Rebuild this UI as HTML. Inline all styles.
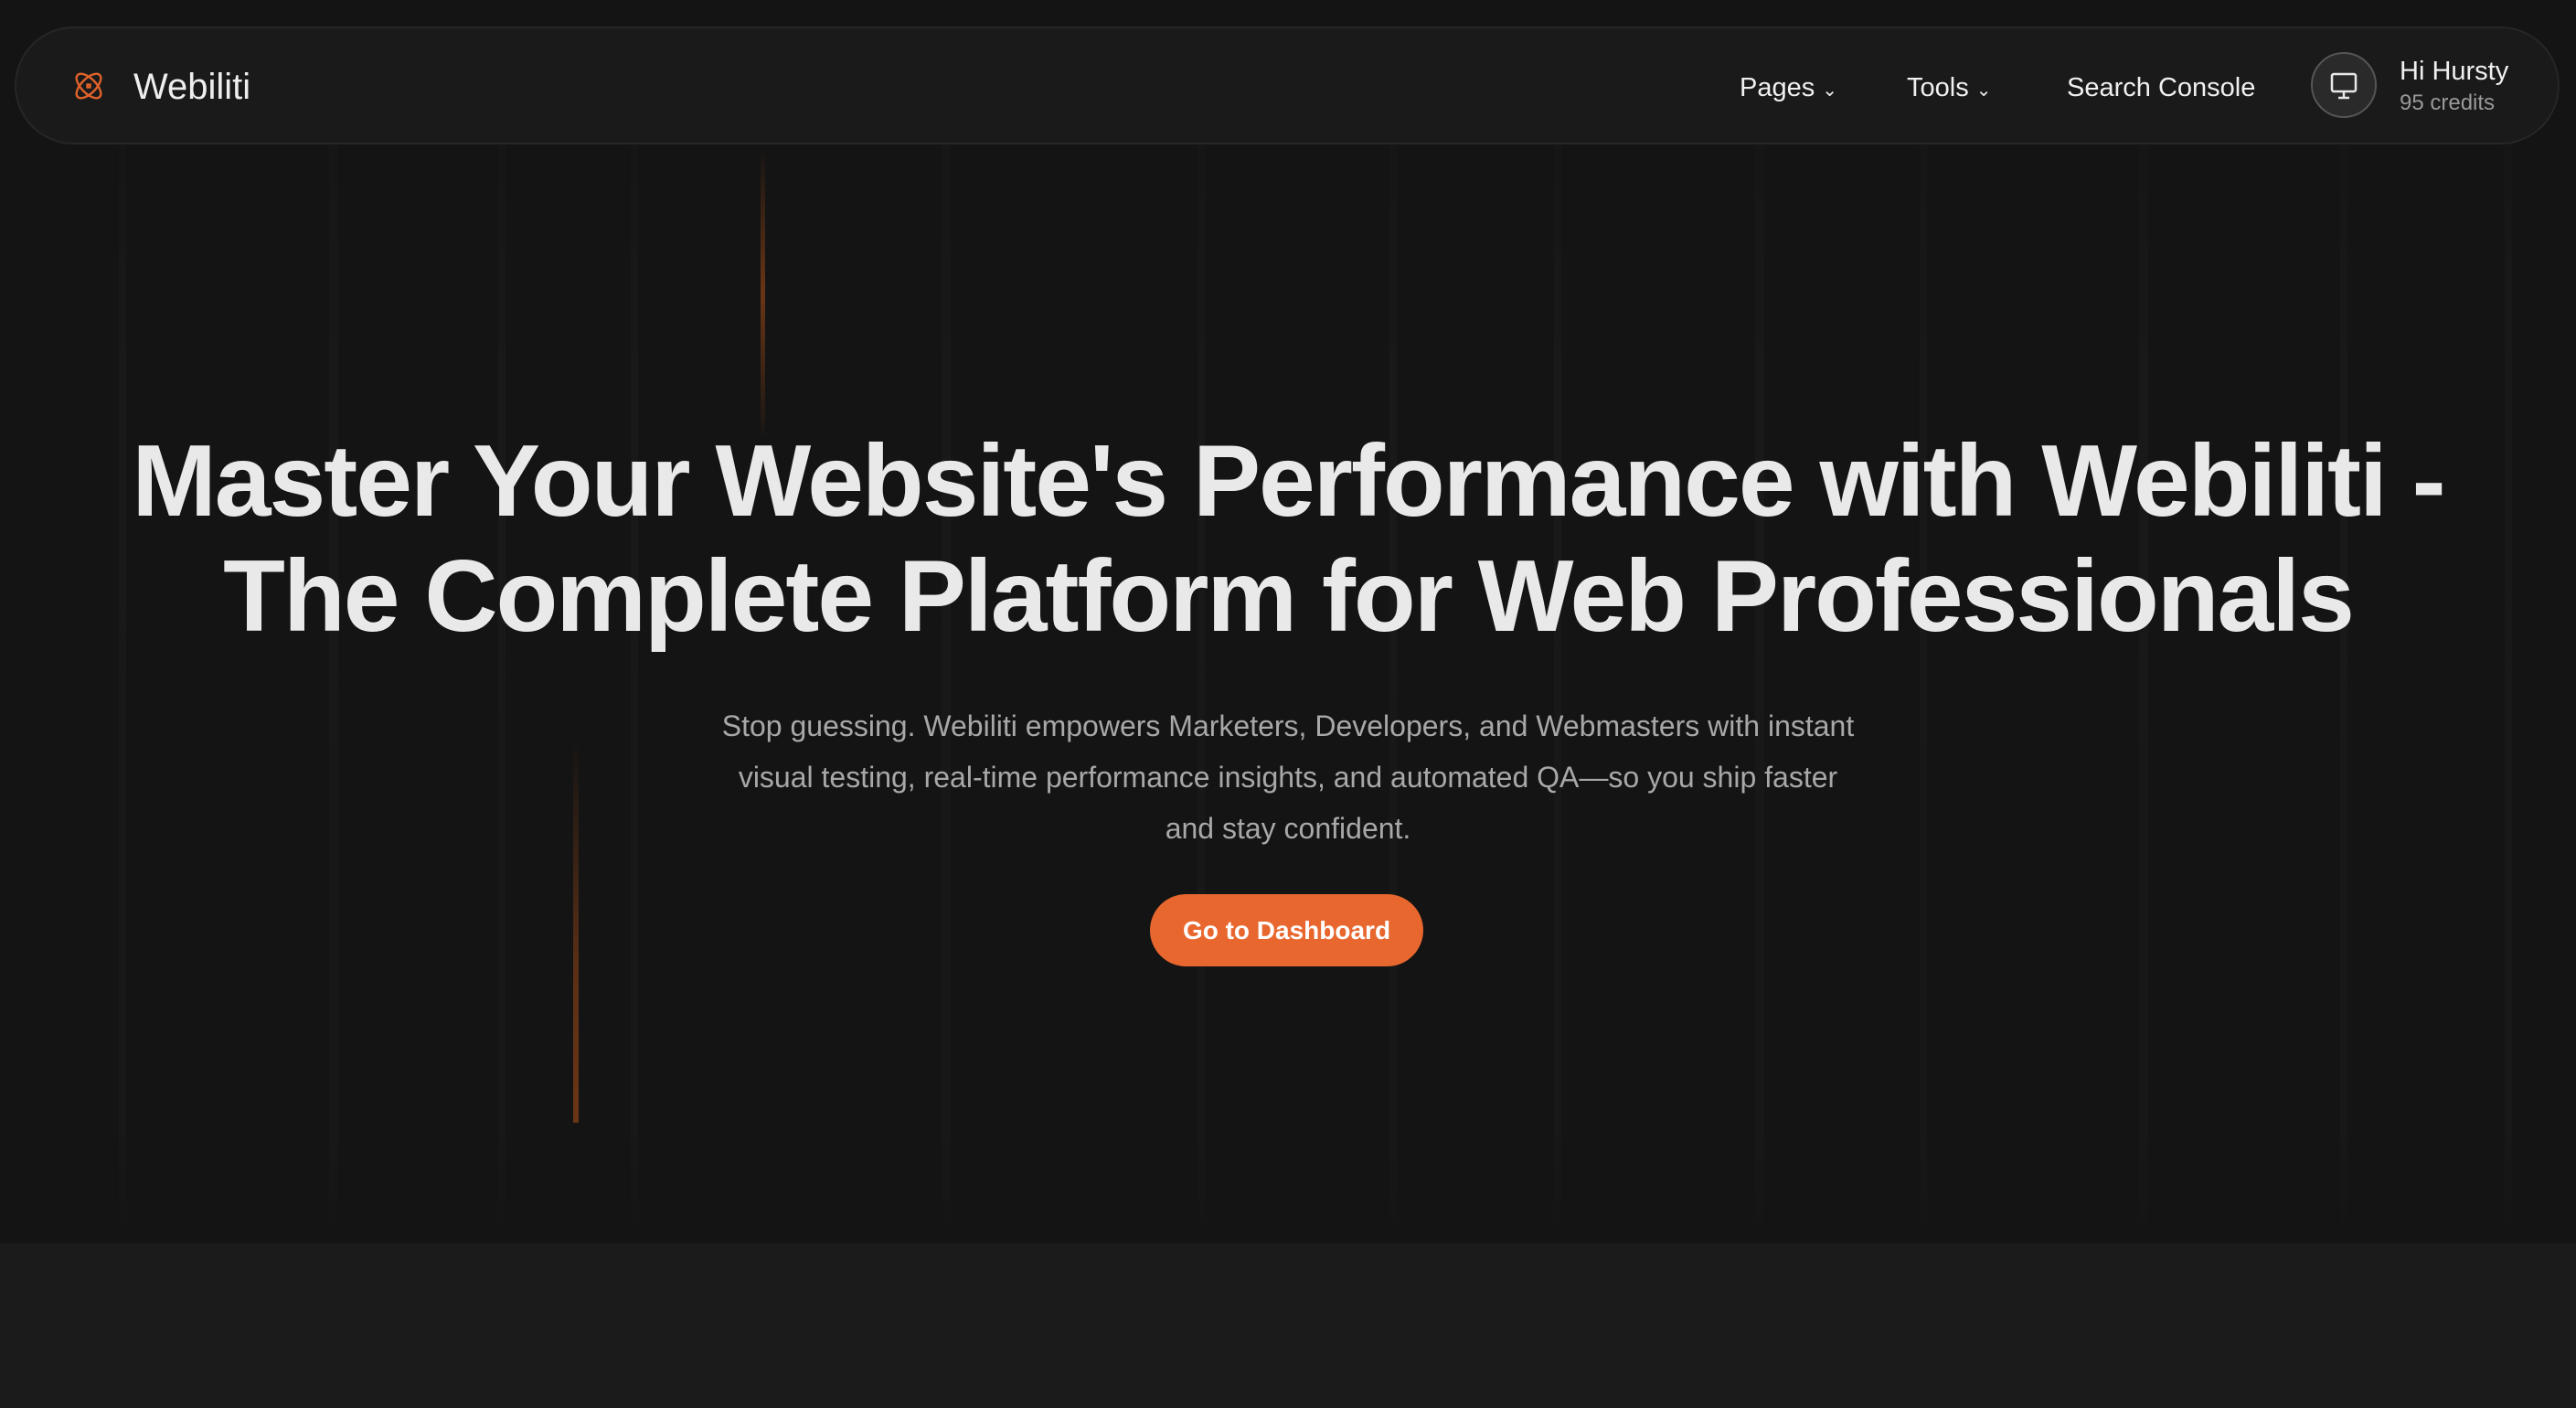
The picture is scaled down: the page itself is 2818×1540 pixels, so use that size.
<!DOCTYPE html>
<html><head><meta charset="utf-8"><style>
*{margin:0;padding:0;box-sizing:border-box}
body{width:2818px;height:1540px;background:#1b1b1b;font-family:"Liberation Sans",sans-serif;overflow:hidden;position:relative}
.hero{position:absolute;left:0;top:0;width:2818px;height:1360px;background:#141414;overflow:hidden}
.str{position:absolute;top:0;height:1360px;background:linear-gradient(#17171700,#191919 30%,#181818 90%,#14141400)}
.nav{position:absolute;left:16px;top:29px;width:2784px;height:129px;border-radius:65px;background:#1a1a1a;border:2px solid #262626}
.logo{position:absolute;left:80px;top:77px}
.brand{position:absolute;left:146px;top:73px;color:#eee;font-size:40px}
.ni{position:absolute;top:80px;color:#f0f0f0;font-size:29px}
.av{position:absolute;left:2528px;top:57px;width:72px;height:72px;border-radius:50%;background:#2a2a2a;border:2px solid #555}
h1{position:absolute;left:0;width:2818px;top:463px;text-align:center;color:#e9e9e9;font-size:111px;line-height:126px;font-weight:bold;letter-spacing:-2px}
p{position:absolute;left:409px;width:2000px;top:766px;text-align:center;color:#a8a8a8;font-size:32px;line-height:56px}
.btn{position:absolute;left:1258px;top:978px;width:299px;height:79px;border-radius:40px;background:#e8672f;color:#fff;font-size:28px;font-weight:bold;text-align:center;line-height:79px}
</style></head><body>
<div class="hero">
<div class="str" style="left:130px;width:8px"></div>
<div class="str" style="left:360px;width:10px"></div>
<div class="str" style="left:545px;width:8px"></div>
<div class="str" style="left:690px;width:8px"></div>
<div class="str" style="left:1030px;width:10px"></div>
<div class="str" style="left:1310px;width:8px"></div>
<div class="str" style="left:1520px;width:8px"></div>
<div class="str" style="left:1700px;width:8px"></div>
<div class="str" style="left:1920px;width:10px"></div>
<div class="str" style="left:2100px;width:8px"></div>
<div class="str" style="left:2340px;width:10px"></div>
<div class="str" style="left:2560px;width:8px"></div>
<div class="str" style="left:2740px;width:8px"></div>
<div style="position:absolute;left:832px;top:162px;width:5px;height:320px;background:linear-gradient(#5a2f1500,#6a3515,#5a2f1500)"></div>
<div style="position:absolute;left:627px;top:808px;width:6px;height:420px;background:linear-gradient(#5a2f1500,#5a2f15 60%,#6a3515)"></div>
</div>
<div class="nav"></div>
<svg class="logo" width="34" height="34" viewBox="0 0 34 34" fill="none" stroke="#e0622a" stroke-width="2.4"><ellipse cx="17" cy="17" rx="8" ry="17" transform="rotate(45 17 17)"/><ellipse cx="17" cy="17" rx="8" ry="17" transform="rotate(-45 17 17)"/><rect x="15.5" y="15.5" width="3" height="3"/></svg>
<div class="brand">Webiliti</div>
<div class="ni" style="left:1903px">Pages <span style="font-size:20px">&#8964;</span></div>
<div class="ni" style="left:2086px">Tools <span style="font-size:20px">&#8964;</span></div>
<div class="ni" style="left:2261px">Search Console</div>
<div class="av"><svg width="72" height="72" viewBox="0 0 72 72" style="position:absolute;left:-2px;top:-2px" fill="none" stroke="#e8e8e8" stroke-width="2.5"><rect x="23" y="24" width="26" height="19" rx="2"/><path d="M36 43v7M30 50h12"/></svg></div>
<div style="position:absolute;left:2625px;top:62px;color:#f0f0f0;font-size:29px">Hi Hursty</div>
<div style="position:absolute;left:2625px;top:99px;color:#999;font-size:24px">95 credits</div>
<h1>Master Your Website's Performance with Webiliti -<br>The Complete Platform for Web Professionals</h1>
<p>Stop guessing. Webiliti empowers Marketers, Developers, and Webmasters with instant<br>visual testing, real-time performance insights, and automated QA—so you ship faster<br>and stay confident.</p>
<div class="btn">Go to Dashboard</div>
</body></html>
